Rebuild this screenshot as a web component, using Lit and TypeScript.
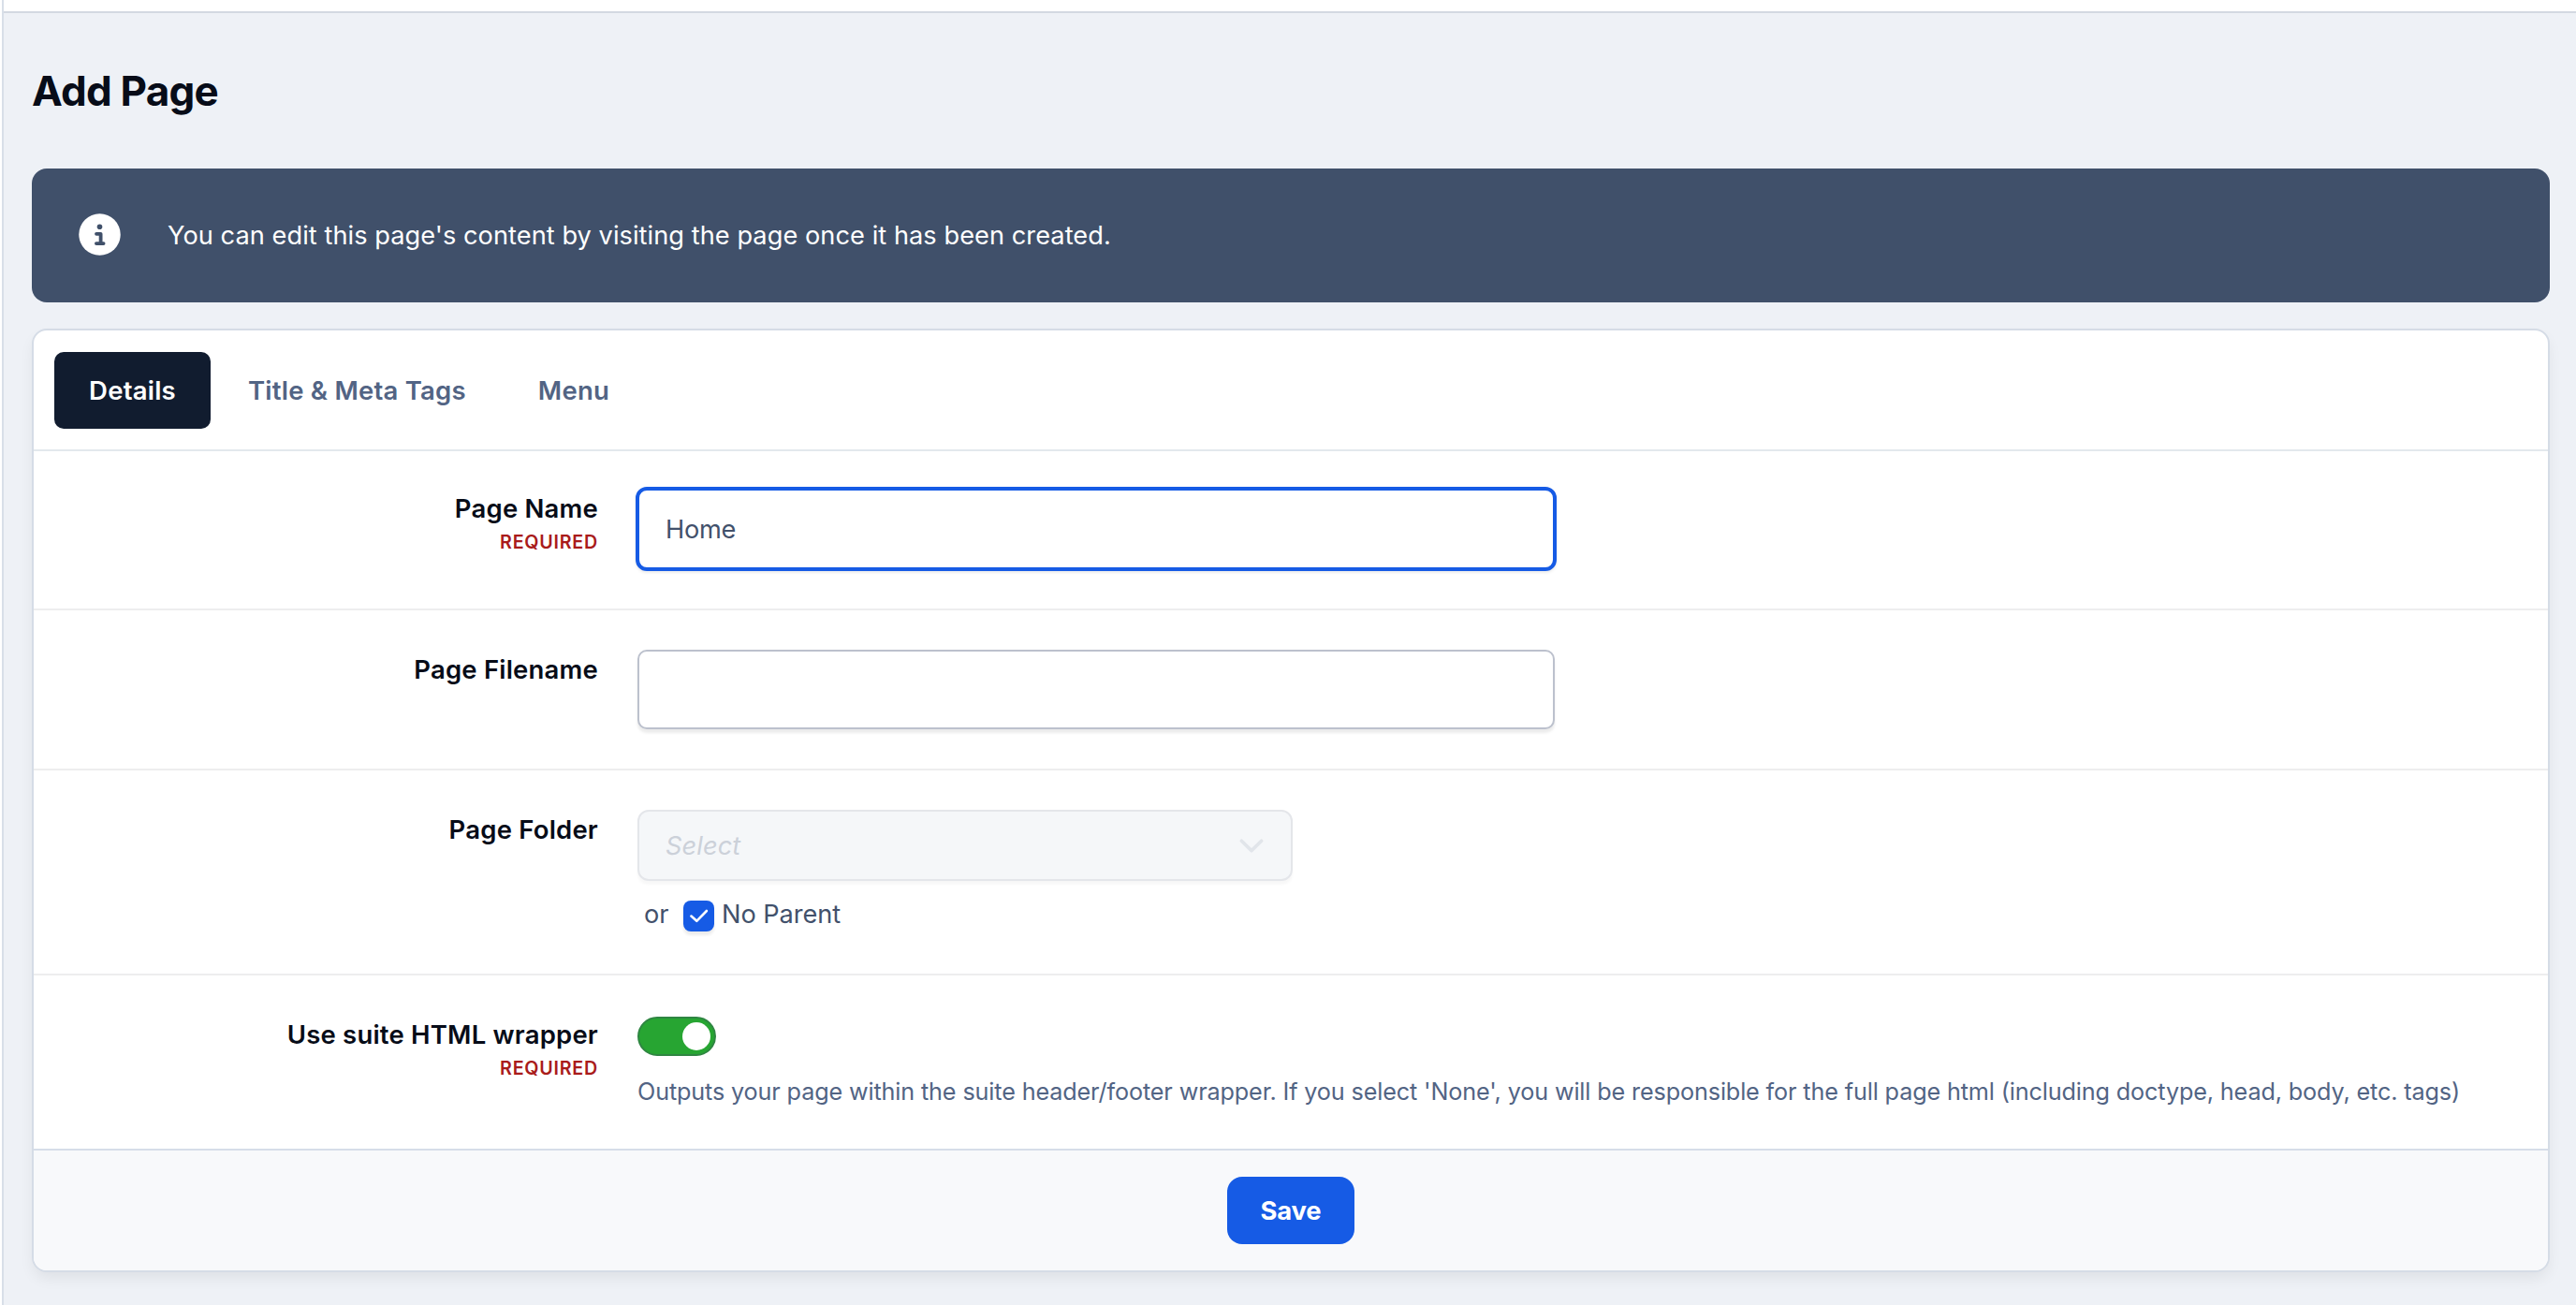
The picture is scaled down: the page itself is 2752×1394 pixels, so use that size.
import { LitElement, html, css, nothing, type TemplateResult } from "lit";
import { customElement, state, property } from "lit/decorators.js";
import { classMap } from "lit/directives/class-map.js";

@customElement("form-row")
export class FormRow extends LitElement {
  @property() label = "";
  @property({ type: Boolean }) required = false;

  static styles = css`
    :host {
      display: flex;
      box-sizing: border-box;
      padding-left: 36px;
      border-bottom: 2px solid #ededee;
    }
    :host([last]) {
      border-bottom: none;
    }
    .label {
      width: 567px;
      flex: none;
      padding-top: 43px;
      text-align: right;
    }
    :host([compact]) .label {
      padding-top: 41px;
    }
    .name {
      color: #070c18;
      font-size: 27.5px;
      font-weight: 600;
      line-height: 41px;
      letter-spacing: 0.2px;
      white-space: nowrap;
    }
    .required {
      color: #a91b1b;
      font-size: 19.7px;
      font-weight: 600;
      line-height: 28px;
      letter-spacing: 0.75px;
      margin-top: 1px;
    }
    .control {
      flex: 1;
      padding-top: 42px;
      padding-left: 42px;
    }
  `;

  render() {
    return html`
      <div class="label">
        <div class="name">${this.label}</div>
        ${this.required ? html`<div class="required">REQUIRED</div>` : nothing}
      </div>
      <div class="control"><slot></slot></div>
    `;
  }
}

@customElement("app-root")
export class AppRoot extends LitElement {
  @state() private tab = "Details";
  @state() private wrapper = true;

  private tabs = ["Details", "Title & Meta Tags", "Menu"];

  static styles = css`
    :host {
      display: block;
      font-family: Inter, "Liberation Sans", sans-serif;
    }
    * {
      box-sizing: border-box;
    }
    .page {
      height: 1394px;
      margin-left: 2px;
      border-left: 2px solid #d8dfe8;
      background: #eef1f6;
      overflow: hidden;
    }
    .topbar {
      height: 14px;
      background: #fff;
      border-bottom: 2px solid #d3d9e1;
    }
    .main {
      padding: 52px 28px 0 30px;
    }
    h1 {
      margin: 0;
      height: 114px;
      color: #070c18;
      font-size: 44px;
      font-weight: 700;
      line-height: 63px;
      letter-spacing: -0.8px;
    }
    .notice {
      display: flex;
      align-items: center;
      height: 143px;
      padding: 0 0 2px 50px;
      border-radius: 16px;
      background: #40506a;
      color: #fff;
      font-size: 27.2px;
      letter-spacing: 0.05px;
    }
    .notice span {
      padding-top: 2px;
    }
    .notice svg {
      width: 45px;
      height: 45px;
      margin-right: 50px;
    }
    .card {
      margin-top: 28px;
      border: 2px solid #d5dce6;
      border-radius: 16px;
      background: #fff;
      box-shadow: 0 8px 16px -2px rgba(0, 0, 0, 0.07);
      overflow: hidden;
    }
    .tabs {
      display: flex;
      gap: 3px;
      height: 129px;
      padding: 23px 22px;
      border-bottom: 2px solid #e3e8ed;
    }
    .tab {
      height: 82px;
      padding: 0 37px;
      border: 0;
      border-radius: 10px;
      background: none;
      color: #526484;
      font: 600 27.5px/82px Inter, "Liberation Sans", sans-serif;
      letter-spacing: 0.22px;
      white-space: nowrap;
    }
    .tab.active {
      width: 167px;
      background: #111c2f;
      color: #fff;
    }
    .input {
      display: block;
      width: 980px;
      height: 85px;
      padding: 0 28px;
      border: 2px solid #bcc1cd;
      border-radius: 10px;
      background: #fff;
      color: #42516b;
      font: 400 27.2px Inter, "Liberation Sans", sans-serif;
      letter-spacing: -0.25px;
      box-shadow: 0 4px 3px rgba(0, 0, 0, 0.08);
      outline: none;
    }
    .input.focused {
      width: 984px;
      height: 90px;
      margin: -4px 0 0 -2px;
      padding: 0 28px;
      border: 4px solid #165be5;
      border-radius: 12px;
      box-shadow: 0 2px 3px rgba(0, 0, 0, 0.08);
    }
    .row-name { height: 170px; }
    .row-file { height: 171px; }
    .row-folder { height: 219px; }
    .row-wrapper { height: 185px; }
    .select {
      display: flex;
      align-items: center;
      justify-content: space-between;
      width: 700px;
      height: 76px;
      padding: 0 29px 0 28px;
      border: 2px solid #e4e6ea;
      border-radius: 12px;
      background: #f5f7f9;
      color: #ccd1d9;
      font-size: 27.2px;
      font-style: italic;
      letter-spacing: 0.1px;
      box-shadow: 0 4px 3px rgba(0, 0, 0, 0.03);
    }
    .select svg {
      width: 26px;
      height: 16px;
      margin-top: 2px;
      fill: none;
      stroke: #e1e5ea;
      stroke-width: 3.6;
      stroke-linecap: round;
      stroke-linejoin: round;
    }
    .parent {
      display: flex;
      align-items: center;
      height: 33px;
      margin-top: 21px;
      padding-left: 7px;
      color: #42516b;
      font-size: 27.2px;
      letter-spacing: -0.05px;
      line-height: 33px;
    }
    .parent span {
      padding-bottom: 4px;
    }
    .parent .or {
      width: 28px;
    }
    .check {
      display: block;
      width: 33px;
      height: 33px;
      margin: 0 8px 0 14px;
      border-radius: 8px;
      background: #165be5;
      box-shadow: 0 4px 3px rgba(0, 0, 0, 0.08);
    }
    .check path {
      fill: none;
      stroke: #fff;
      stroke-width: 2.6;
      stroke-linecap: round;
      stroke-linejoin: round;
    }
    .toggle {
      display: flex;
      justify-content: flex-start;
      align-items: center;
      width: 84px;
      height: 42px;
      margin-top: 2px;
      padding: 0 4px;
      border: 2px solid #b8bfca;
      border-radius: 21px;
      background: #ccd1d9;
    }
    .toggle.on {
      justify-content: flex-end;
      border-color: #2f8642;
      background: #27a532;
    }
    .knob {
      width: 30px;
      height: 30px;
      border-radius: 50%;
      background: #fff;
    }
    .hint {
      margin-top: 18px;
      color: #526484;
      font-size: 25.2px;
      letter-spacing: -0.13px;
      line-height: 40px;
      white-space: nowrap;
    }
    .footer {
      display: flex;
      justify-content: center;
      align-items: center;
      height: 130px;
      border-top: 2px solid #d6dde9;
      background: #f8f9fb;
    }
    .save {
      width: 136px;
      height: 72px;
      padding: 0;
      border: 0;
      border-radius: 16px;
      background: #165be5;
      color: #fff;
      font: 700 27.4px Inter, "Liberation Sans", sans-serif;
      letter-spacing: -0.2px;
    }
  `;

  private renderTab(name: string): TemplateResult {
    return html`<button
      class=${classMap({ tab: true, active: name === this.tab })}
      @click=${() => (this.tab = name)}
    >${name}</button>`;
  }

  render() {
    return html`
      <div class="page">
        <div class="topbar"></div>
        <div class="main">
          <h1>Add Page</h1>
          <div class="notice">
            <svg viewBox="0 0 45 45">
              <circle cx="22.5" cy="22.5" r="22.2" fill="#fff" />
              <circle cx="22.5" cy="14.2" r="2.8" fill="#40506a" />
              <path d="M19 21.8h4.6v10M18.9 32.1h7.7" fill="none" stroke="#40506a" stroke-width="3.8" stroke-linecap="round" stroke-linejoin="round" />
            </svg>
            <span>You can edit this page's content by visiting the page once it has been created.</span>
          </div>
          <div class="card">
            <div class="tabs">${this.tabs.map((t) => this.renderTab(t))}</div>
            <form-row class="row-name" label="Page Name" required compact>
              <input class="input focused" value="Home" />
            </form-row>
            <form-row class="row-file" label="Page Filename">
              <input class="input" />
            </form-row>
            <form-row class="row-folder" label="Page Folder">
              <div class="select">
                Select
                <svg viewBox="0 0 26 16"><path d="M2.4 2.2L13 12.6L23.6 2.2" /></svg>
              </div>
              <div class="parent">
                <span class="or">or</span>
                <svg class="check" viewBox="0 0 33 33"><path d="M8.4 16.6L14.3 21.8L24.9 11" /></svg>
                <span>No Parent</span>
              </div>
            </form-row>
            <form-row class="row-wrapper" label="Use suite HTML wrapper" required last>
              <div
                class=${classMap({ toggle: true, on: this.wrapper })}
                @click=${() => (this.wrapper = !this.wrapper)}
              ><div class="knob"></div></div>
              <div class="hint">Outputs your page within the suite header/footer wrapper. If you select 'None', you will be responsible for the full page html (including doctype, head, body, etc. tags)</div>
            </form-row>
            <div class="footer"><button class="save">Save</button></div>
          </div>
        </div>
      </div>
    `;
  }
}
